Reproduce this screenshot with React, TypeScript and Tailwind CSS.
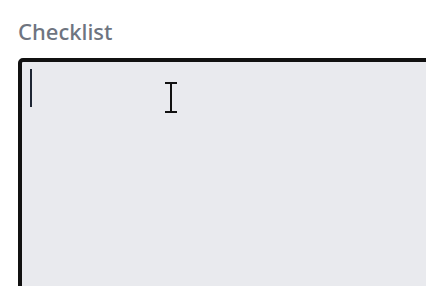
export default function App() {
  return (
    <div className="h-[286px] bg-white overflow-hidden pl-[18px] pt-[17px]" style={{ fontFamily: '"Noto Sans", "Open Sans", sans-serif' }}>
      <label className="block text-[22px] font-medium leading-[28px] text-[#6e7480]">Checklist</label>
      <div className="relative mt-[13px] h-[260px] w-[440px] rounded-tl-[5px] border-[4px] border-[#111111] bg-[#e9eaee] pl-[8px] pt-[7px]">
        {/* text caret */}
        <div className="h-[38px] w-[2px] bg-[#1e2533]" />
        {/* mouse I-beam */}
        <svg className="absolute left-[142px] top-[20px]" width="15" height="32" viewBox="0 0 15 32" fill="none">
          <path d="M1 1H13M1 30H13M7 1V30" stroke="#111" strokeWidth="2" />
        </svg>
      </div>
    </div>
  );
}
